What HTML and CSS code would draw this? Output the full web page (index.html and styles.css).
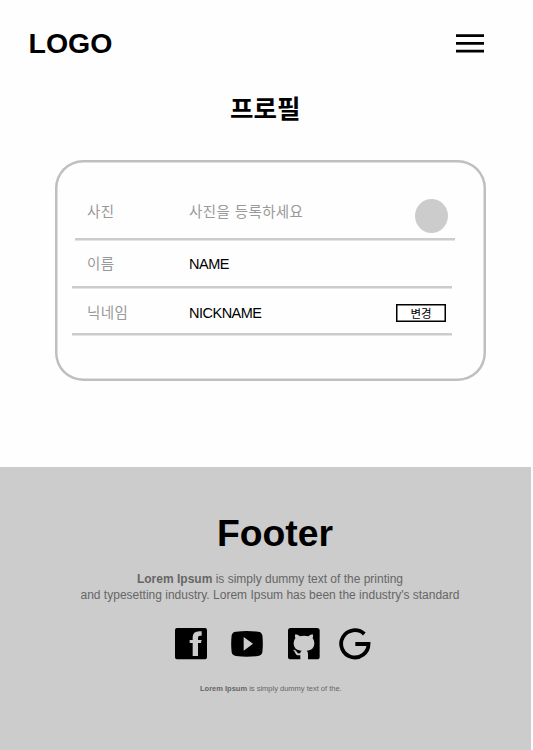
FILE: index.html
```html
<!DOCTYPE html>
<html lang="ko">
<head>
<meta charset="utf-8">
<title>프로필</title>
<link rel="stylesheet" href="styles.css">
</head>
<body>
<header class="header">
  <div class="logo">LOGO</div>
  <svg class="menu" viewBox="0 0 28 19"><path d="M0 1.7H28M0 9.4H28M0 17.1H28" stroke="#000" stroke-width="2.8"/></svg>
</header>
<main class="main">
  <h1 class="title">프로필</h1>
  <section class="card">
    <div class="row row-photo">
      <span class="label">사진</span>
      <span class="hint">사진을 등록하세요</span>
      <span class="avatar"></span>
    </div>
    <div class="row row-name">
      <span class="label">이름</span>
      <span class="value name">NAME</span>
    </div>
    <div class="row row-nick">
      <span class="label">닉네임</span>
      <span class="value nickname">NICKNAME</span>
      <button class="change">변경</button>
    </div>
  </section>
</main>
<footer class="footer">
  <h2 class="footer-title">Footer</h2>
  <p class="about"><span class="line1"><b>Lorem Ipsum</b> is simply dummy text of the printing</span><br><span class="line2">and typesetting industry. Lorem Ipsum has been the industry's standard</span></p>
  <div class="social">
    <svg class="icon" viewBox="30 39 96 96"><path fill-rule="evenodd" d="M36 39H120Q126 39 126 45V127Q126 133 120 133H36Q30 133 30 127V45Q30 39 36 39ZM83 75H74V84H83V123H99V84H108L110 75H99V68Q99 62 105 62H110V49H103Q83 49 83 67Z"/></svg>
    <svg class="icon" viewBox="199 39 96 96"><path fill-rule="evenodd" d="M214 50Q247 46 280 50Q291 51 293 61Q296 86 293 112Q291 122 280 123Q247 127 214 123Q203 122 201 112Q198 86 201 61Q203 51 214 50ZM237 66V107L265 86Z"/></svg>
    <svg class="icon" viewBox="38 39 96 96"><path fill-rule="evenodd" d="M46 39H125Q133 39 133 47V125Q133 133 125 133H98V117Q98 110 94 107C108 106 117 99 117 83Q117 76 112 70Q115 64 112 58Q106 58 99 64Q86 61 74 64Q67 58 60 58Q57 64 60 70Q55 76 55 83C55 99 64 106 79 107Q75 110 75 114C69 117 66 114 63 109Q59 103 53 105C60 108 59 121 70 121H75V133H46Q38 133 38 125V47Q38 39 46 39Z"/></svg>
    <svg class="icon google" viewBox="191 39 96 96"><path d="M267 57A41 41 0 1 0 279.500 87H240" fill="none" stroke="#000" stroke-width="11.500"/></svg>
  </div>
  <p class="copy"><b>Lorem Ipsum</b> is simply dummy text of the.</p>
</footer>
</body>
</html>
```
FILE: styles.css
```css
* { box-sizing: border-box; }
body {
  margin: 0;
  background: #fefefe;
  color: #000;
  font-family: "Liberation Sans", "Noto Sans CJK KR", sans-serif;
}
.header {
  display: flex;
  justify-content: space-between;
  align-items: center;
  height: 87px;
  padding: 0 49.5px 0 28.5px;
}
.logo { font-size: 28.5px; font-weight: 700; line-height: 32px; padding-bottom: 2px; }
.menu { width: 28px; height: 19px; }
.main { height: 380px; }
.title {
  margin: 0;
  padding: 2px 0 0 230px;
  font-size: 25.5px;
  line-height: 40px;
  height: 73px;
  font-weight: 700;
}
.card {
  width: 431px;
  height: 221px;
  margin-left: 55px;
  padding: 22.5px 32px 0 17px;
  box-shadow: inset 0 0 0 2.5px #bfbfbf;
  border-radius: 28px;
}
.row {
  display: flex;
  align-items: center;
  width: 380px;
  height: 47.5px;
  border-bottom: 2px solid #ccc;
  box-shadow: 0 1px #e4e4e4;
  white-space: nowrap;
}
.row-photo { height: 57.5px; margin-left: 3px; padding: 3px 7px 0 0; }
.row-name { padding-top: 2px; }
.row-nick { padding: 6px 6px 0 0; }
.label, .hint { color: #999; font-size: 14.5px; line-height: 22px; letter-spacing: 0.4px; }
.label { width: 102px; margin-left: 15px; }
.row-photo .label { margin-left: 12px; }
.value { font-size: 14.5px; line-height: 22px; letter-spacing: -0.5px; }
.avatar, .change { margin-left: auto; }
.avatar { width: 33px; height: 34px; margin-top: 8px; border-radius: 50%; background: #ccc; }
.change {
  width: 50px;
  height: 18px;
  margin-bottom: 1px;
  padding: 0;
  border: 1px solid #000;
  box-shadow: inset 0 0 0 0.5px #000;
  background: #fff;
  font: 11.5px/14px "Noto Sans CJK KR", sans-serif;
  color: #000;
}
.footer {
  width: 531px;
  height: 283px;
  padding-top: 44px;
  background: #ccc;
  color: #666;
}
.footer-title {
  margin: 0 0 16px 217px;
  font-size: 37.3px;
  line-height: 44px;
  color: #000;
}
.about {
  margin: 0;
  padding-left: 9px;
  text-align: center;
  font-size: 12px;
  line-height: 16px;
  white-space: nowrap;
}
.social { display: flex; gap: 24.4px; margin: 25px 0 0 175px; height: 32px; }
.icon { width: 32px; height: 32px; fill: #000; overflow: visible; }
.google { margin-left: -5px; }
.copy { margin: 22px 0 0 200px; font-size: 7.5px; line-height: 13px; white-space: nowrap; }
```
